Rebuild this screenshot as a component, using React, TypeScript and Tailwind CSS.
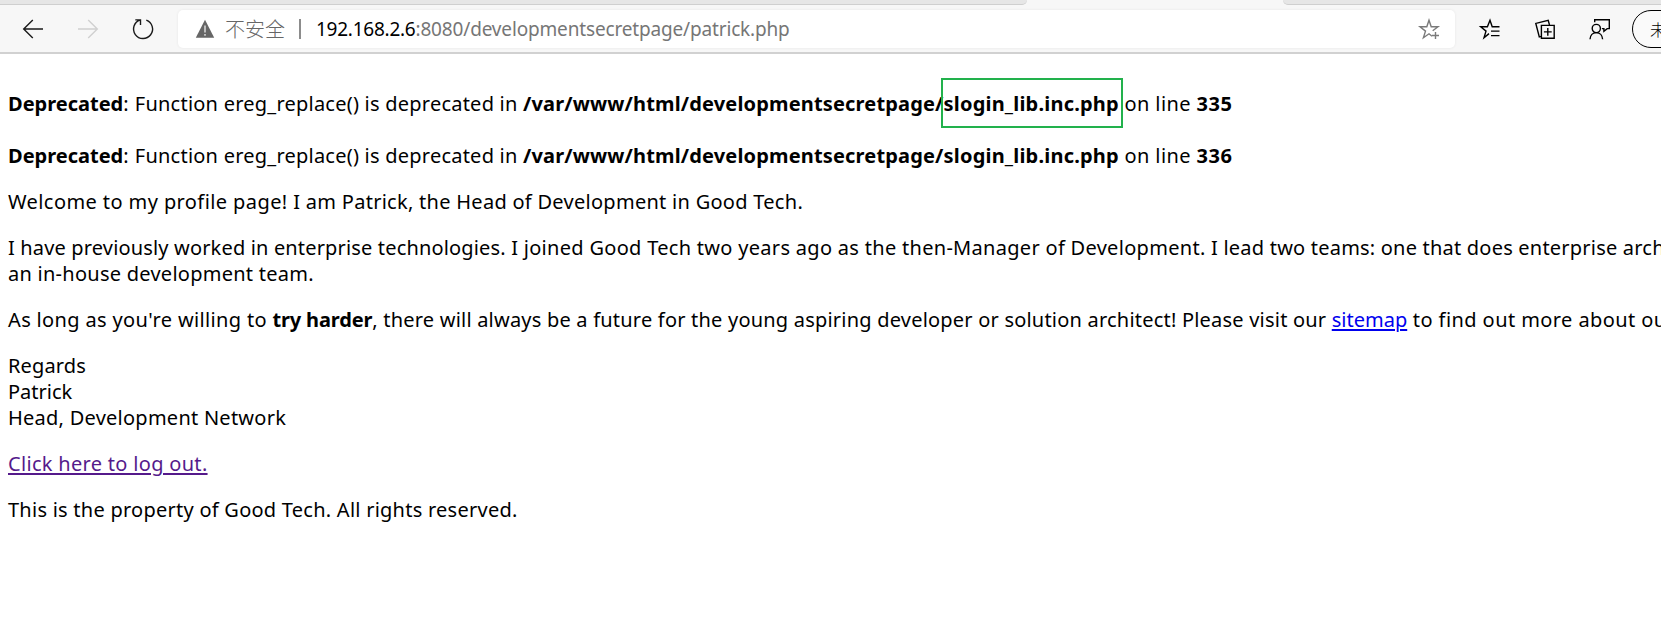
import type { ReactNode } from 'react';

function Icon({ size = 24, className = '', children }: { size?: number; className?: string; children: ReactNode }) {
  return (
    <svg
      width={size}
      height={size}
      viewBox={`0 0 ${size} ${size}`}
      fill="none"
      stroke="currentColor"
      strokeWidth="1.4"
      className={`shrink-0 ${className}`}
    >
      {children}
    </svg>
  );
}

function TabStrip() {
  return (
    <div className="flex h-[5px] bg-[#f7f7f7]">
      <div className="w-[1027px] shrink-0 rounded-br-[5px] border-b border-[#cfcfcf] bg-[#e6e6e6]" />
      <div className="w-[256px] shrink-0" />
      <div className="flex-1 rounded-bl-[5px] border-b border-[#cfcfcf] bg-[#e6e6e6]" />
    </div>
  );
}

function AddressBar() {
  return (
    <div className="flex h-[38px] w-[1277px] shrink-0 items-center rounded-[5px] bg-white pl-[17px] shadow-[0_0_3px_rgba(0,0,0,0.07)]">
      <Icon size={20} className="text-[#666666]">
        <path d="M10 .8 19.2 18.8H.8Z" fill="currentColor" stroke="none" />
        <path d="M10 6.5v7M10 15v1.8" stroke="#e4e4e4" strokeWidth="1.4" />
      </Icon>
      <span className="ml-[10px] font-['Noto_Sans_CJK_SC',sans-serif] text-[20px] leading-[26px] font-light whitespace-nowrap text-[#666666]">
        不安全
      </span>
      <span className="ml-[14px] h-5 w-[2px] bg-[#8c8c8c]" />
      <div className="ml-[15px] font-['Noto_Sans',sans-serif] text-[19px] leading-[26px] whitespace-nowrap text-[#767676]">
        <span className="tracking-[-0.25px] text-black">192.168.2.6</span>
        <span className="tracking-[-0.16px]">:8080/developmentsecretpage/patrick.php</span>
      </div>
      <Icon className="mr-[14px] ml-auto text-[#7a7a7a]">
        <path d="m15 19.2-3-2.4-5.6 4 2.1-6.7L3 9.8h6.8L12 3.3l2.2 6.5H21l-5.3 4" />
        <path d="M18.5 15v7M15 18.5h7" />
      </Icon>
    </div>
  );
}

function Toolbar() {
  return (
    <div className="flex h-[49px] items-center overflow-hidden border-b-2 border-[#d1d1d1] bg-[#f7f7f7]">
      <Icon className="ml-[21px] text-[#1a1a1a]">
        <path d="M11.8 3 2.7 12l9.1 9M2.7 12H22" />
      </Icon>
      <Icon className="ml-[31px] text-[#d0d0d0]">
        <path d="m12.2 3 9.1 9-9.1 9M21.3 12H2" />
      </Icon>
      <Icon className="ml-[31px] text-[#1a1a1a]">
        <path d="M15.3 3.1a9.5 9.5 0 1 1-6.2-.1M4.3 2.9h5.2v5" />
      </Icon>
      <div className="w-[23px] shrink-0" />
      <AddressBar />
      <Icon className="ml-[23px] text-black">
        <path d="M11 16.6 6 20.8l2-6.7-5.3-4.3h6.7L12 3.3l2.2 6.5h7.3M13 14.1h8.5M13 18.6h8.5" />
      </Icon>
      <Icon className="ml-[31px] text-black">
        <path d="M8.4 8.4h12.8v12.9H8.4ZM14.8 11v7.8M10.9 14.9h7.8" />
        <path d="m8.4 19.4-2.1.6L2.8 6.4 15.2 3.3l1.3 4.7" />
      </Icon>
      <Icon className="ml-[31px] text-black">
        <circle cx="8.3" cy="11.5" r="4.1" />
        <path d="M2 22.3c.2-4 2.8-6.7 6.3-6.7s6.1 2.7 6.3 6.7" />
        <path d="M6.7 5.2V2.8h14.6v8.8h-2.1l-3.3 2.7v-2.7h-2" />
      </Icon>
      <div className="ml-[20px] flex h-[38px] w-[110px] shrink-0 items-center rounded-full border-[1.5px] border-black bg-[#fafafa] pl-[17px] font-['Noto_Sans_CJK_SC',sans-serif] text-[16px] leading-[20px] font-light text-black">
        未
      </div>
    </div>
  );
}

function Deprecation({ line, marked = false }: { line: string; marked?: boolean }) {
  return (
    <p className="whitespace-nowrap">
      <b>Deprecated</b>
      <span className="tracking-[0.5px]">: </span>
      <span className="tracking-[0.23px]">Function ereg_replace() is deprecated in </span>
      <b className="tracking-[0.16px]">/var/www/html/developmentsecretpage/</b>
      <b className="relative tracking-[0.2px]">
        slogin_lib.inc.php
        {marked && <i className="absolute -top-[12px] -left-[3px] h-[50px] w-[182px] border-2 border-[#22b14c]" />}
      </b>
      <span className="tracking-[0.4px]"> on line </span>
      <b className="tracking-[0.6px]">{line}</b>
    </p>
  );
}

export default function App() {
  return (
    <div className="h-[617px] w-full overflow-hidden bg-white">
      <TabStrip />
      <Toolbar />
      <main className="flex flex-col gap-5 overflow-hidden pt-[37px] pl-2 font-['Noto_Sans',sans-serif] text-[20px] leading-[26px] whitespace-nowrap text-black">
        <div className="flex flex-col gap-[26px]">
          <Deprecation line="335" marked />
          <Deprecation line="336" />
        </div>
        <p>
          <span className="tracking-[0.41px]">Welcome to my profile page! </span>
          <span className="tracking-[0.28px]">I am Patrick, the Head of Development in Good Tech.</span>
        </p>
        <p>
          <span className="tracking-[0.16px]">I have previously worked in enterprise technologies. </span>
          <span className="tracking-[0.3px]">
            I joined Good Tech two years ago as the then-Manager of Development.{' '}
          </span>
          <span className="tracking-[0.21px]">I lead two teams: one that does enterprise arch</span>
          <br />
          <span className="tracking-[0.26px]">an in-house development team.</span>
        </p>
        <p>
          <span className="tracking-[0.35px]">As long as you&apos;re willing to </span>
          <b className="tracking-[-0.15px]">try harder</b>
          <span className="tracking-[0.21px]">
            , there will always be a future for the young aspiring developer or solution architect! Please visit our{' '}
          </span>
          <a className="text-[#0000ee] underline decoration-2 underline-offset-2">sitemap</a>
          <span className="tracking-[0.42px]"> to find out more about ou</span>
        </p>
        <p>
          <span className="tracking-[0.15px]">Regards</span>
          <br />
          Patrick
          <br />
          <span className="tracking-[0.25px]">Head, Development Network</span>
        </p>
        <p className="tracking-[0.31px]">
          <a className="text-[#551a8b] underline decoration-2 underline-offset-2">Click here to log out.</a>
        </p>
        <p className="tracking-[0.25px]">This is the property of Good Tech. All rights reserved.</p>
      </main>
    </div>
  );
}
